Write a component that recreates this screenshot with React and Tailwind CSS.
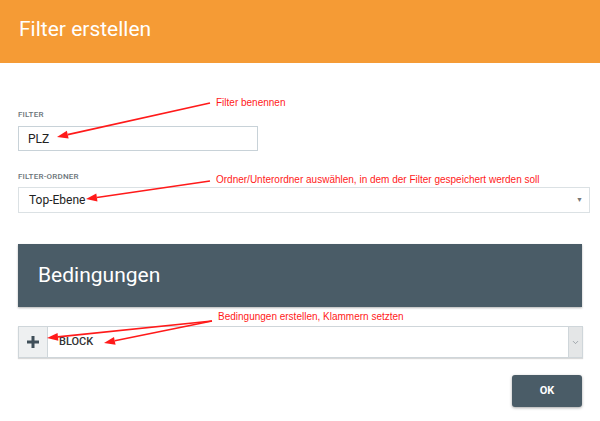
import { ChevronDown } from "lucide-react";

function Arrow({ x1, y1, x2, y2 }) {
    // Red annotation arrow with a filled head at (x2, y2)
    const a = Math.atan2(y2 - y1, x2 - x1);
    const len = 11, w = 4;
    const bx = x2 - len * Math.cos(a), by = y2 - len * Math.sin(a);
    const p1 = `${bx + w * Math.sin(a)},${by - w * Math.cos(a)}`;
    const p2 = `${bx - w * Math.sin(a)},${by + w * Math.cos(a)}`;
    return (
        <g>
            <line x1={x1} y1={y1} x2={bx} y2={by} stroke="#ff1a1a" strokeWidth="1.6" />
            <polygon points={`${x2},${y2} ${p1} ${p2}`} fill="#ff1a1a" />
        </g>
    );
}

export default function App() {
    return (
        <div className="w-[600px] h-[421px] relative overflow-hidden bg-white font-['Roboto',sans-serif]">
            {/* Header */}
            <div className="h-[63px] pl-[19px] flex items-center bg-[#f59b35]">
                <h1 className="text-[21px] text-white leading-none -mt-[4px]">Filter erstellen</h1>
            </div>

            <div className="px-[18px] pt-[46px]">
                <label className="block text-[8px] font-medium tracking-wide text-[#6b7479]">FILTER</label>
                <div className="w-[240px] h-[25px] mt-[5px] pl-[9px] flex items-center border border-[#c8d2d8] text-[12px] text-[#222]">
                    PLZ
                </div>

                <label className="block mt-[20px] text-[8px] font-medium tracking-wide text-[#6b7479]">FILTER-ORDNER</label>
                <div className="w-[572px] h-[26px] mt-[4px] pl-[10px] pr-[6px] flex items-center justify-between border border-[#dbe1e4] text-[12px] text-[#222]">
                    <span>Top-Ebene</span>
                    <span className="text-[7px] text-[#777]">▼</span>
                </div>

                <div className="w-[564px] h-[63px] mt-[31px] pl-[20px] flex items-center bg-[#4a5c67] shadow-[0_1px_2px_rgba(0,0,0,0.3)]">
                    <h2 className="text-[21px] text-white leading-none">Bedingungen</h2>
                </div>

                <div className="w-[565px] h-[32px] mt-[19px] flex border border-[#cfd6da] shadow-[0_1px_1px_rgba(0,0,0,0.15)]">
                    <div className="w-[29px] flex items-center justify-center bg-[#eef0f1] border-r border-[#cfd6da]">
                        <svg width="12" height="12" viewBox="0 0 12 12">
                            <rect x="4.5" y="0" width="3" height="12" fill="#3f4f59" />
                            <rect x="0" y="4.5" width="12" height="3" fill="#3f4f59" />
                        </svg>
                    </div>
                    <div className="flex-1 pl-[11px] flex items-center text-[11px] font-medium text-[#333]">BLOCK</div>
                    <div className="w-[14px] flex items-center justify-center bg-[#e4e6e7] border-l border-[#cfd6da]">
                        <ChevronDown size={9} color="#8a9298" strokeWidth={2} />
                    </div>
                </div>

                <div className="mt-[17px] flex justify-end w-[564px]">
                    <button className="w-[70px] h-[32px] rounded-[3px] bg-[#4a5c67] text-white text-[11px] font-bold shadow-[0_1px_3px_rgba(0,0,0,0.35)]">
                        OK
                    </button>
                </div>
            </div>

            {/* Annotations */}
            <svg className="absolute top-0 left-0 pointer-events-none" width="600" height="421">
                <Arrow x1={210} y1={103} x2={57} y2={137} />
                <Arrow x1={210} y1={181} x2={86} y2={199} />
                <Arrow x1={212} y1={321} x2={47} y2={338} />
                <Arrow x1={212} y1={321} x2={104} y2={343} />
            </svg>
            <div className="absolute left-[216px] top-[98px] text-[10px] leading-none text-[#ff1a1a] font-['Liberation_Sans',Arial,sans-serif]">Filter benennen</div>
            <div className="absolute left-[216px] top-[175px] text-[10px] leading-none text-[#ff1a1a] font-['Liberation_Sans',Arial,sans-serif]">Ordner/Unterordner auswählen, in dem der Filter gespeichert werden soll</div>
            <div className="absolute left-[218px] top-[312px] text-[10px] leading-none text-[#ff1a1a] font-['Liberation_Sans',Arial,sans-serif]">Bedingungen erstellen, Klammern setzten</div>
        </div>
    );
}
